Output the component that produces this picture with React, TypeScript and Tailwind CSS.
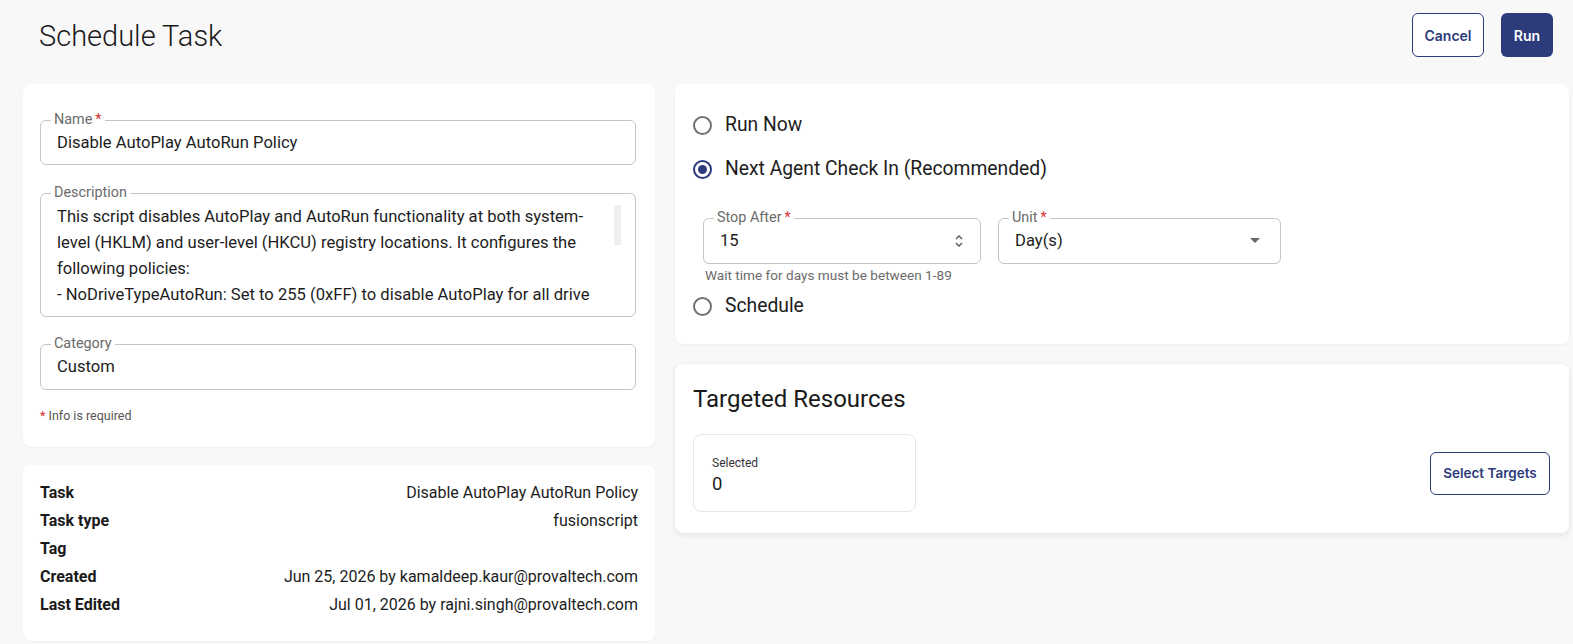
import type { ReactNode } from 'react'

const NAVY = '#2c3b7c'

const description = `This script disables AutoPlay and AutoRun functionality at both system-level (HKLM) and user-level (HKCU) registry locations. It configures the following policies:
- NoDriveTypeAutoRun: Set to 255 (0xFF) to disable AutoPlay for all drive types
- NoAutorun: Set to 1 to disable AutoRun for all drives
- HonorAutorunSetting: Set to 1 to enforce the setting`

function Field({
  label,
  required,
  children,
  className = '',
}: {
  label: string
  required?: boolean
  children: ReactNode
  className?: string
}) {
  return (
    <fieldset className={`border border-[#c4c4c4] rounded-[6px] px-[10px] ${className}`}>
      <legend className="px-[3px] text-[14.4px] leading-[16px] text-[#6b6b6b]">
        {label}
        {required && <span className="text-[#d32f2f] ml-[3px]">*</span>}
      </legend>
      {children}
    </fieldset>
  )
}

function Radio({ label, checked }: { label: string; checked?: boolean }) {
  return (
    <div className="h-[44px] flex items-center gap-[13px] pl-[18px]">
      {checked ? (
        <span
          className="w-[19px] h-[19px] rounded-full border-2 flex items-center justify-center"
          style={{ borderColor: NAVY }}
        >
          <span className="w-[9px] h-[9px] rounded-full" style={{ background: NAVY }} />
        </span>
      ) : (
        <span className="w-[19px] h-[19px] rounded-full border-2 border-[#727272]" />
      )}
      <span className="text-[19.3px] text-[#1d1d1d]">{label}</span>
    </div>
  )
}

export default function App() {
  const details = [
    { k: 'Task', v: 'Disable AutoPlay AutoRun Policy' },
    { k: 'Task type', v: 'fusionscript' },
    { k: 'Tag', v: '' },
    { k: 'Created', v: 'Jun 25, 2026 by kamaldeep.kaur@provaltech.com' },
    { k: 'Last Edited', v: 'Jul 01, 2026 by rajni.singh@provaltech.com' },
  ]

  return (
    <div
      className="min-h-screen bg-[#f8f8f9] text-[#1d1d1d]"
      style={{ fontFamily: 'Roboto, "Liberation Sans", sans-serif' }}
    >
      {/* Header */}
      <header className="flex items-center justify-between pl-[39px] pr-[20px] pt-[13px] h-[57px]">
        <h1 className="text-[29px] font-light leading-none text-[#1a1a1a] mt-[2px]">Schedule Task</h1>
        <div className="flex gap-[17px]" style={{ fontFamily: 'Inter, sans-serif' }}>
          <button
            className="h-[44px] w-[72px] rounded-[6px] border bg-white text-[14px] font-semibold"
            style={{ borderColor: NAVY, color: NAVY }}
          >
            Cancel
          </button>
          <button
            className="h-[44px] w-[52px] rounded-[6px] text-white text-[14px] font-semibold"
            style={{ background: NAVY }}
          >
            Run
          </button>
        </div>
      </header>

      <main className="flex gap-[20px] pl-[23px] pr-[4px] pt-[27px] pb-[4px]">
        {/* Left column */}
        <div className="w-[632px] shrink-0 flex flex-col gap-[18px]">
          <section className="bg-white rounded-[8px] shadow-[0_1px_3px_rgba(0,0,0,0.04)] pl-[17px] pr-[19px] pt-[28px] pb-[23px]">
            <Field label="Name" required>
              <div className="h-[30px] flex items-center px-[6px] text-[16.6px] pt-[1px]">
                Disable AutoPlay AutoRun Policy
              </div>
              <div className="h-[6px]" />
            </Field>

            <Field label="Description" className="mt-[20px]">
              <div className="flex pt-[3px] pb-[8px]">
                <div className="w-[552px] h-[104px] overflow-hidden pl-[6px] text-[16.6px] leading-[26px] whitespace-pre-line">
                  {description}
                </div>
                <div className="ml-auto mr-[4px] mt-[1px] w-[7px] h-[40px] bg-[#efefef]" />
              </div>
            </Field>

            <Field label="Category" className="mt-[19px]">
              <div className="h-[30px] flex items-center px-[6px] text-[16.6px] pt-[1px]">Custom</div>
              <div className="h-[7px]" />
            </Field>

            <p className="mt-[18px] text-[12.5px] leading-[16px] text-[#555]">
              <span className="text-[#d32f2f]">*</span> Info is required
            </p>
          </section>

          <section className="bg-white rounded-[8px] shadow-[0_1px_3px_rgba(0,0,0,0.04)] pl-[17px] pr-[17px] pt-[14px] pb-[22px]">
            {details.map(d => (
              <div key={d.k} className="h-[28px] flex items-center justify-between text-[16px]">
                <span className="font-bold text-[#1a1a1a]">{d.k}</span>
                <span className="text-[#1d1d1d]">{d.v}</span>
              </div>
            ))}
          </section>
        </div>

        {/* Right column */}
        <div className="flex-1 flex flex-col gap-[20px]">
          <section className="bg-white rounded-[8px] shadow-[0_1px_3px_rgba(0,0,0,0.05)] pt-[19px] pb-[16px]">
            <Radio label="Run Now" />
            <Radio label="Next Agent Check In (Recommended)" checked />

            <div className="pl-[28px] mt-[19px]">
              <div className="flex gap-[17px]">
                <Field label="Stop After" required className="w-[278px]">
                  <div className="h-[30px] flex items-center justify-between pl-[6px] pr-[6px] text-[16.6px]">
                    <span>15</span>
                    <svg width="10" height="14" viewBox="0 0 10 14" fill="none" stroke="#555" strokeWidth="1.4">
                      <path d="M2 5 L5 2 L8 5" />
                      <path d="M2 9 L5 12 L8 9" />
                    </svg>
                  </div>
                  <div className="h-[7px]" />
                </Field>
                <Field label="Unit" required className="w-[283px]">
                  <div className="h-[30px] flex items-center justify-between pl-[6px] pr-[10px] text-[16.6px]">
                    <span>Day(s)</span>
                    <svg width="10" height="6" viewBox="0 0 10 6">
                      <path d="M0 0 L10 0 L5 5 Z" fill="#666" />
                    </svg>
                  </div>
                  <div className="h-[7px]" />
                </Field>
              </div>
              <p className="mt-[3px] pl-[2px] text-[13.6px] leading-[16px] text-[#6b6b6b]">
                Wait time for days must be between 1-89
              </p>
            </div>

            <div className="mt-[1px]">
              <Radio label="Schedule" />
            </div>
          </section>

          <section className="bg-white rounded-[8px] shadow-[0_2px_6px_rgba(0,0,0,0.09)] pl-[18px] pr-[19px] pt-[20px] pb-[21px]">
            <h2 className="text-[24px] leading-[30px] text-[#1a1a1a]">Targeted Resources</h2>
            <div className="mt-[20px] flex items-center justify-between">
              <div className="w-[223px] h-[78px] border border-[#e6e6e6] rounded-[8px] pl-[18px] pt-[21px]">
                <div className="text-[12px] leading-[14px] text-[#333]">Selected</div>
                <div className="text-[18.5px] leading-[24px] mt-[2px]">0</div>
              </div>
              <button
                className="h-[43px] w-[120px] rounded-[6px] border bg-white text-[13.5px] font-semibold"
                style={{ borderColor: NAVY, color: NAVY, fontFamily: 'Inter, sans-serif' }}
              >
                Select Targets
              </button>
            </div>
          </section>
        </div>
      </main>
    </div>
  )
}
